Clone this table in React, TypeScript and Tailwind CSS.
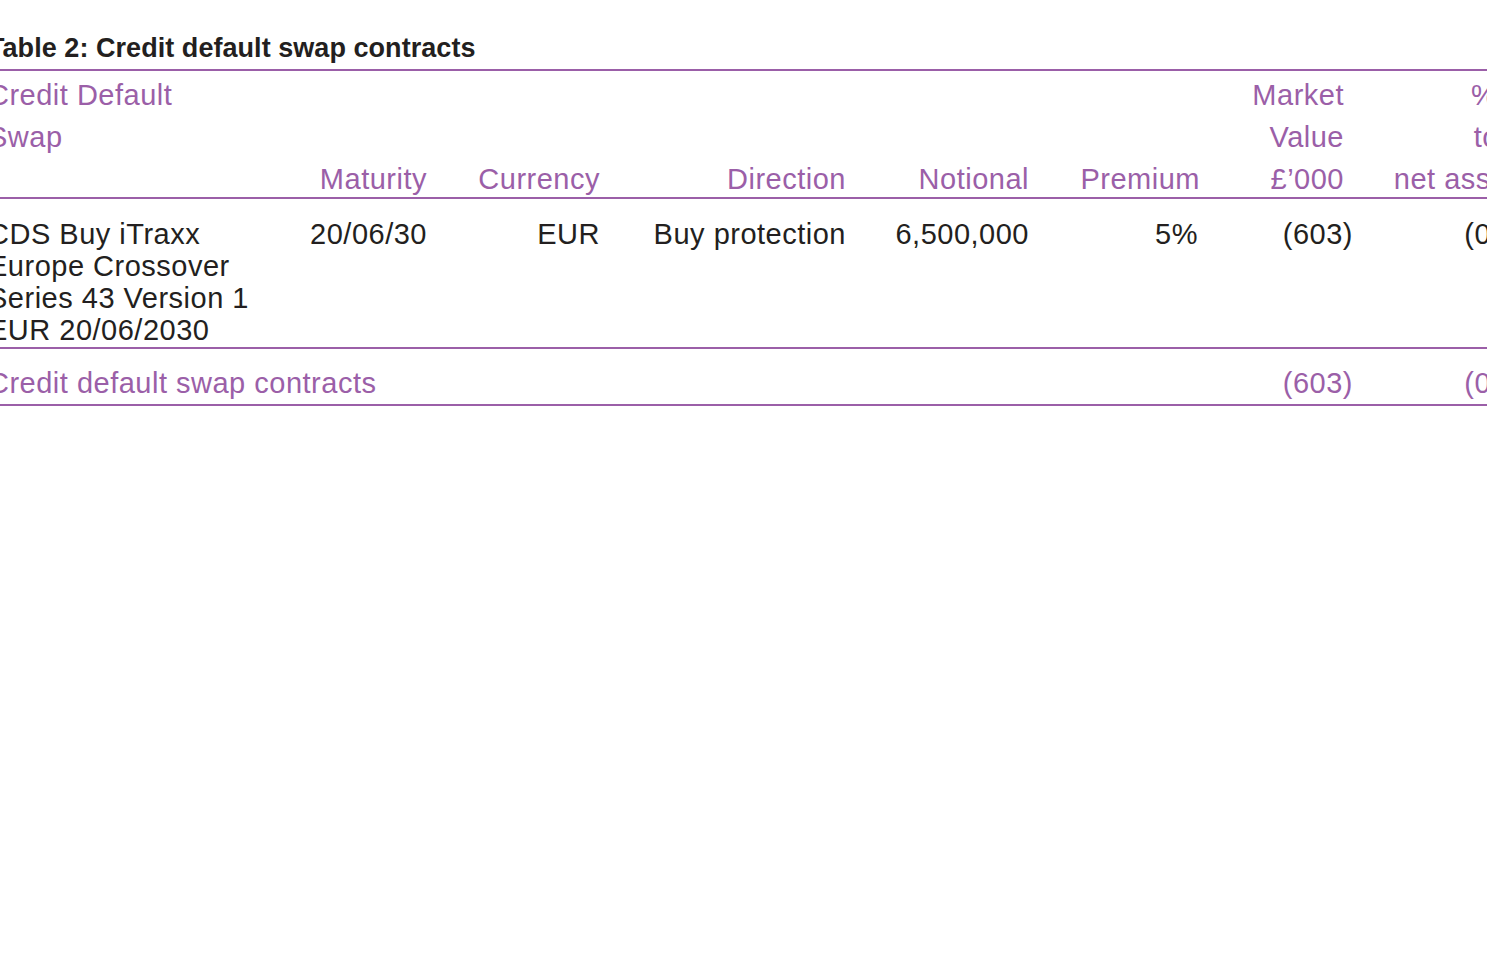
const cols = "grid grid-cols-[272px_167px_173px_246px_183px_171px_153px_190px]";

function HeadCell({ lines, align = "right", pr = "" }: { lines: string[]; align?: "left" | "right"; pr?: string }) {
  const padded = align === "left" ? [...lines, ...Array(3 - lines.length).fill("")] : [...Array(3 - lines.length).fill(""), ...lines];
  return (
    <div className={`flex flex-col pt-[3px] ${align === "right" ? "text-right" : "text-left"} ${pr}`}>
      {padded.map((l, i) => (
        <div key={i} className={`${i === 2 ? "h-[39px]" : "h-[42px]"} whitespace-nowrap`}>
          {l}
        </div>
      ))}
    </div>
  );
}

export default function App() {
  return (
    <div className="h-[961px] w-[1487px] overflow-hidden bg-white font-['Liberation_Sans',Arial,sans-serif] text-[#231f20]">
      <div className="ml-[-12px] w-[1580px]">
        <h2 className="pt-[32px] text-[27px] font-bold leading-[32px] tracking-[0.05px] text-[#231f20]">
          Table 2: Credit default swap contracts
        </h2>
        <div className="mt-[5px] h-[2px] bg-[#9b5fa8]" />

        <div className={`${cols} text-[29px] leading-[42px] tracking-[0.5px] text-[#9b5fa8]`}>
          <HeadCell lines={["Credit Default", "Swap"]} align="left" />
          <HeadCell lines={["Maturity"]} />
          <HeadCell lines={["Currency"]} />
          <HeadCell lines={["Direction"]} />
          <HeadCell lines={["Notional"]} />
          <HeadCell lines={["Premium"]} />
          <HeadCell lines={["Market", "Value", "£’000"]} pr="pr-[9px]" />
          <HeadCell lines={["% of", "total", "net assets"]} pr="pr-[12px]" />
        </div>
        <div className="h-[2px] bg-[#9b5fa8]" />

        <div className={`${cols} pt-[19px] pb-[1px] text-[29px] leading-[32px] tracking-[0.5px]`}>
          <div className="text-left">
            CDS Buy iTraxx
            <br />
            Europe Crossover
            <br />
            Series 43 Version 1
            <br />
            EUR 20/06/2030
          </div>
          <div className="text-right">20/06/30</div>
          <div className="text-right">EUR</div>
          <div className="text-right">Buy protection</div>
          <div className="text-right">6,500,000</div>
          <div className="pr-[2px] text-right">5%</div>
          <div className="text-right">(603)</div>
          <div className="text-right">(0.04)</div>
        </div>
        <div className="h-[2px] bg-[#9b5fa8]" />

        <div className={`${cols} pt-[18px] pb-[5px] text-[29px] leading-[32px] tracking-[0.5px] text-[#9b5fa8]`}>
          <div className="col-span-6 whitespace-nowrap">Credit default swap contracts</div>
          <div className="text-right">(603)</div>
          <div className="text-right">(0.04)</div>
        </div>
        <div className="h-[2px] bg-[#9b5fa8]" />
      </div>
    </div>
  );
}
